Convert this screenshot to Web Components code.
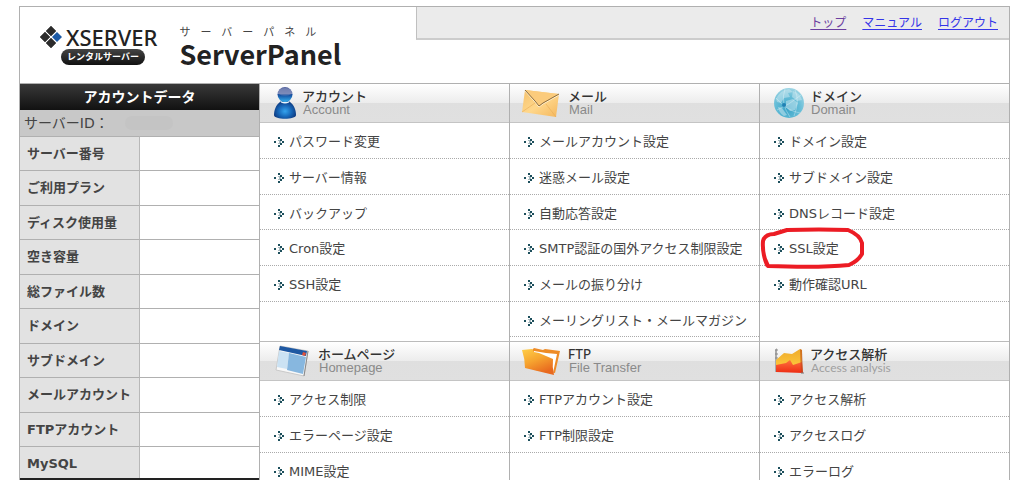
<!DOCTYPE html>
<html lang="ja">
<head>
<meta charset="utf-8">
<title>ServerPanel</title>
<style>
    html {
        overflow-x: hidden;
    }
    body {
        margin: 6px 14px 0 19px;
        background: #fff;
        color: #333;
        font-family: "DejaVu Sans", "Noto Sans CJK JP", sans-serif;
        font-size: 13px;
        line-height: 18px;
    }
</style>
</head>
<body>
<panel-page>
    <panel-header slot="header">
        <panel-link href="#top" visited>トップ</panel-link>
        <panel-link href="#manual">マニュアル</panel-link>
        <panel-link href="#logout">ログアウト</panel-link>
    </panel-header>

    <account-data slot="side" heading="アカウントデータ" serverid="サーバーID："
        rows="サーバー番号,ご利用プラン,ディスク使用量,空き容量,総ファイル数,ドメイン,サブドメイン,メールアカウント,FTPアカウント,MySQL"></account-data>

    <menu-section heading="アカウント" sub="Account" icon="account">
        <menu-item>パスワード変更</menu-item>
        <menu-item>サーバー情報</menu-item>
        <menu-item>バックアップ</menu-item>
        <menu-item>Cron設定</menu-item>
        <menu-item>SSH設定</menu-item>
    </menu-section>
    <menu-section heading="メール" sub="Mail" icon="mail">
        <menu-item>メールアカウント設定</menu-item>
        <menu-item>迷惑メール設定</menu-item>
        <menu-item>自動応答設定</menu-item>
        <menu-item>SMTP認証の国外アクセス制限設定</menu-item>
        <menu-item>メールの振り分け</menu-item>
        <menu-item>メーリングリスト・メールマガジン</menu-item>
    </menu-section>
    <menu-section heading="ドメイン" sub="Domain" icon="domain">
        <menu-item>ドメイン設定</menu-item>
        <menu-item>サブドメイン設定</menu-item>
        <menu-item>DNSレコード設定</menu-item>
        <menu-item marked>SSL設定</menu-item>
        <menu-item>動作確認URL</menu-item>
    </menu-section>
    <menu-section heading="ホームページ" sub="Homepage" icon="homepage">
        <menu-item>アクセス制限</menu-item>
        <menu-item>エラーページ設定</menu-item>
        <menu-item>MIME設定</menu-item>
    </menu-section>
    <menu-section heading="FTP" sub="File Transfer" icon="ftp">
        <menu-item>FTPアカウント設定</menu-item>
        <menu-item>FTP制限設定</menu-item>
    </menu-section>
    <menu-section heading="アクセス解析" sub="Access analysis" icon="analysis">
        <menu-item>アクセス解析</menu-item>
        <menu-item>アクセスログ</menu-item>
        <menu-item>エラーログ</menu-item>
    </menu-section>
</panel-page>

<script>
const icons = {
    account: `<svg width="22" height="32" viewBox="0 0 22 32" aria-hidden="true">
        <defs>
            <radialGradient id="body" cx=".5" cy=".6" r=".6"><stop offset="0" stop-color="#35a4ee"/><stop offset=".5" stop-color="#1767b8"/><stop offset="1" stop-color="#0b2d70"/></radialGradient>
            <linearGradient id="head" x2="0" y2="1"><stop offset="0" stop-color="#50609c"/><stop offset=".45" stop-color="#7482b4"/><stop offset=".5" stop-color="#124a9c"/><stop offset="1" stop-color="#38b2f0"/></linearGradient>
        </defs>
        <path d="M7 13h8l1 2c4 3 6 8 6 13 0 5-22 5-22 0C0 23 2 18 6 15z" fill="url(#body)"/>
        <path d="M6 13.500q5 3 10 0l-1 2q-4 2-8 0z" fill="#e8f5fc"/>
        <circle cx="11" cy="7.500" r="7.500" fill="url(#head)"/>
        <path d="M4 7q0-6 7-6t7 6q-7 3-14 0z" fill="#8793bd" opacity=".55"/>
    </svg>`,
    mail: `<svg width="38" height="32" viewBox="0 0 38 32" aria-hidden="true">
        <defs><linearGradient id="env" x2="1" y2="1"><stop offset="0" stop-color="#f5c16c"/><stop offset=".5" stop-color="#ffd78b"/><stop offset="1" stop-color="#f4b65c"/></linearGradient></defs>
        <path d="M1 3l34 4-3 23-34-5z" fill="url(#env)"/>
        <path d="M1 3l15 17L35 7" fill="#fbcb7c"/>
        <path d="M-2 25l13-9m11 1l10 13" stroke="#e7ac57" fill="none" opacity=".6"/>
        <path d="M1 4l10 11 4 5 4-3 16-9" fill="none" stroke="#fff0cf" stroke-width="1"/>
        <path d="M1 3l10 11 4 5 4-3 16-9" fill="none" stroke="#6e5430" stroke-width="1" opacity=".8"/>
    </svg>`,
    domain: `<svg width="30" height="30" viewBox="0 0 30 30" aria-hidden="true">
        <defs><radialGradient id="globe" cx=".45" cy=".7" r=".7"><stop offset="0" stop-color="#3ba4c8"/><stop offset=".6" stop-color="#66bdd7"/><stop offset="1" stop-color="#9ed5e4"/></radialGradient></defs>
        <circle cx="15" cy="15" r="15" fill="url(#globe)"/>
        <path d="M2 11q4-9 13-10l4 3-5 1 2 4-6 1-3 5-4-1zM19 3q7 2 9 9l-5 1-5-4zM12 13l7-2 5 4-3 7-5 1-4-4zM4 19l4 1 5 7-3 1q-5-3-6-9z" fill="#cfeaf1" opacity=".5"/>
        <path d="M2 10q11 13 24 15M11 1q-5 14 5 28M3 22Q15 17 27 7M21 2q5 11-1 26" fill="none" stroke="#f0fafc" stroke-width="1" opacity=".35"/>
        <circle cx="10" cy="17" r="2" fill="#2181b4"/>
    </svg>`,
    homepage: `<svg width="38" height="32" viewBox="0 0 38 32" aria-hidden="true">
        <path d="M6 1l28 5-4 25-28-6z" fill="#f8f8f8" stroke="#c9c9c9" stroke-width="1"/>
        <path d="M34 6l-4 25" stroke="#8a8a8a" stroke-width="1"/>
        <path d="M6 1l27 5-1 5-27-6z" fill="#1e58a2"/>
        <path d="M29 7l3 1-1 3-3-1z" fill="#e2513a"/>
        <path d="M5 6l10 2-2 16-10-2z" fill="#cbe2f3"/>
        <path d="M15 8l17 4-3 17-16-4z" fill="#87b7df"/>
    </svg>`,
    ftp: `<svg width="38" height="32" viewBox="0 0 38 32" aria-hidden="true">
        <defs><linearGradient id="folder" x2=".5" y2="1"><stop offset="0" stop-color="#ffcf48"/><stop offset=".5" stop-color="#f6a42f"/><stop offset="1" stop-color="#e8691f"/></linearGradient></defs>
        <path d="M8 5l2-2 9 2 2-1 15 2-5 22-20-3z" fill="#ee8b26"/>
        <path d="M10 6l12 2 11 1-4 19-8-14-11-2z" fill="#fff"/>
        <path d="M-2 5l10-1 2 3 5 1 14 6q-1 8 1 16L1 23Q1 14-2 5z" fill="url(#folder)"/>
    </svg>`,
    analysis: `<svg width="30" height="30" viewBox="0 0 30 30" aria-hidden="true">
        <defs>
            <linearGradient id="red" x2="0" y2="1"><stop offset="0" stop-color="#ff703d"/><stop offset="1" stop-color="#ed2c14"/></linearGradient>
            <linearGradient id="yel" x2="0" y2="1"><stop offset="0" stop-color="#efab2c"/><stop offset="1" stop-color="#ffcc3e"/></linearGradient>
        </defs>
        <path d="M3 2L1 4v22h2z" fill="#aaa"/>
        <path d="M1 4h3M1 8h3M1 12h3" stroke="#888"/>
        <path d="M2 14l8-7 8 1 8-5 2 1v20H2z" fill="url(#yel)"/>
        <path d="M2 19l10-2 4-3 3 5 9-3 1 11-27-1z" fill="url(#red)"/>
        <path d="M26 3l2 1 1 22-2 1z" fill="#b94a18" opacity=".6"/>
        <path d="M27 27h3" stroke="#777"/>
    </svg>`
}

class PanelPage extends HTMLElement {
    constructor() {
        super()
        this.attachShadow({ mode: 'open' }).innerHTML = `
            <style>
                :host {
                    display: block;
                    border: 1px solid #b0b0b0;
                    border-bottom: 0;
                }
                .columns {
                    display: grid;
                    grid-template-columns: minmax(0, 29fr) minmax(0, 91fr);
                    align-items: start;
                }
                main {
                    display: grid;
                    grid-template-columns: repeat(3, minmax(0, 1fr));
                }
            </style>
            <slot name="header"></slot>
            <div class="columns">
                <slot name="side"></slot>
                <main><slot></slot></main>
            </div>`
    }
}
customElements.define('panel-page', PanelPage)

class PanelHeader extends HTMLElement {
    constructor() {
        super()
        this.attachShadow({ mode: 'open' }).innerHTML = `
            <style>
                :host {
                    display: grid;
                    grid-template-columns: minmax(0, 40fr) minmax(0, 60fr);
                    align-items: start;
                    min-height: 76px;
                    border-bottom: 1px solid #b0b0b0;
                    color: #222;
                    font-family: "Noto Sans CJK JP", sans-serif;
                }
                .logos {
                    display: flex;
                    align-items: start;
                    gap: 22px;
                    padding: 18px 0 0 20px;
                    white-space: nowrap;
                }
                .brand {
                    display: grid;
                    justify-items: start;
                }
                .name {
                    display: flex;
                    align-items: center;
                    gap: 4px;
                    font: 500 22px/24px "Noto Sans", sans-serif;
                }
                .pill {
                    margin-left: 21px;
                    padding: 0 6px;
                    border-radius: 8px;
                    background: linear-gradient(#444, #111);
                    color: #fff;
                    font-family: Lato, "Noto Sans CJK JP", sans-serif;
                    font-size: 9px;
                    font-weight: 700;
                    line-height: 16px;
                }
                .kana {
                    font-family: Lato, "Noto Sans CJK JP", sans-serif;
                    font-size: 11px;
                    line-height: 14px;
                    letter-spacing: 10px;
                    color: #444;
                }
                h1 {
                    margin: 0;
                    font-size: 27px;
                    font-weight: 700;
                    line-height: 30px;
                }
                nav {
                    display: flex;
                    justify-content: flex-end;
                    gap: 16px;
                    padding: 6px 11px 7px;
                    border-left: 1px solid #c0c0c0;
                    border-bottom: 2px solid #ccc;
                    background: #ebebeb;
                }
            </style>
            <div class="logos">
                <div class="brand">
                    <div class="name">
                        <svg width="22" height="22" viewBox="0 0 22 22" aria-hidden="true">
                            <path d="M11 0l5 5-5 5-5-5zM5 6l5 5-5 5-5-5zM11 12l5 5-5 5-5-5z" fill="#2b2b2b" stroke="#2b2b2b" stroke-width=".5" stroke-linejoin="round"/>
                            <path d="M17 6l5 5-5 5-5-5z" fill="#1c5aa6"/>
                        </svg>
                        <span>XSERVER</span>
                    </div>
                    <div class="pill">レンタルサーバー</div>
                </div>
                <div>
                    <div class="kana">サーバーパネル</div>
                    <h1>ServerPanel</h1>
                </div>
            </div>
            <nav><slot></slot></nav>`
    }
}
customElements.define('panel-header', PanelHeader)

class PanelLink extends HTMLElement {
    connectedCallback() {
        const color = this.hasAttribute('visited') ? '#6b3fa0' : '#3535e8'
        this.attachShadow({ mode: 'open' }).innerHTML = `
            <style>
                :host { display: block; }
                a {
                    color: ${color};
                    font-size: 12px;
                    text-underline-offset: 2px;
                }
            </style>
            <a href="${this.getAttribute('href')}"><slot></slot></a>`
    }
}
customElements.define('panel-link', PanelLink)

class AccountData extends HTMLElement {
    connectedCallback() {
        const rows = this.getAttribute('rows').split(',')
            .map(label => `<tr><th scope="row">${label}</th><td></td></tr>`)
            .join('')
        this.attachShadow({ mode: 'open' }).innerHTML = `
            <style>
                :host {
                    display: block;
                    border-bottom: 3px solid #222;
                    color: #444;
                }
                h2 {
                    margin: 0;
                    background: linear-gradient(#383838, #111);
                    color: #fff;
                    font-size: 14px;
                    font-weight: 700;
                    line-height: 26px;
                    text-align: center;
                }
                .server {
                    display: flex;
                    align-items: center;
                    gap: 16px;
                    padding: 0 4px;
                    background: #c8c8c8;
                    font-size: 14px;
                    line-height: 26px;
                }
                .value {
                    width: 48px;
                    height: 14px;
                    border-radius: 7px;
                    background: #c4c4c4;
                }
                table {
                    width: 100%;
                    border-collapse: separate;
                    border-spacing: 0;
                    table-layout: fixed;
                }
                th, td {
                    box-sizing: border-box;
                    height: 35px;
                    padding: 0 7px;
                    border-top: 1px solid #b0b0b0;
                }
                tr:nth-child(odd) > * { height: 34px; }
                tr:last-child > * {
                    height: 32px;
                    padding-top: 2px;
                }
                th {
                    width: 50%;
                    border-right: 1px solid #b8b8b8;
                    background: #e2e2e2;
                    text-align: left;
                    white-space: nowrap;
                    font-weight: 700;
                }
            </style>
            <h2>${this.getAttribute('heading')}</h2>
            <div class="server">${this.getAttribute('serverid')}<span class="value"></span></div>
            <table>${rows}</table>`
    }
}
customElements.define('account-data', AccountData)

class MenuSection extends HTMLElement {
    connectedCallback() {
        const icon = this.getAttribute('icon')
        this.attachShadow({ mode: 'open' }).innerHTML = `
            <style>
                :host {
                    display: block;
                    padding-bottom: 4px;
                    border-left: 1px solid #b0b0b0;
                }
                :host(:nth-of-type(n+4)) { border-top: 1px solid #bbb; }
                header {
                    display: flex;
                    align-items: center;
                    gap: 6px;
                    box-sizing: border-box;
                    height: 39px;
                    padding-left: 14px;
                    border-bottom: 1px solid #c4c4c4;
                    background: linear-gradient(#fff, #ececec 50%, #dfdfdf 50%, #e0e0e0);
                }
                svg { overflow: visible; }
                h2 {
                    margin: 0;
                    font: 500 13px/14px Lato, "Noto Sans CJK JP", sans-serif;
                }
                p {
                    margin: 0;
                    padding-left: 1px;
                    color: #8a8a8a;
                    font: 13px/14px "Liberation Sans", sans-serif;
                }
                :host([icon="analysis"]) p {
                    color: #a0a0a0;
                    font: 12px/14px Lato, sans-serif;
                }
            </style>
            <header>
                ${icons[icon]}
                <div>
                    <h2>${this.getAttribute('heading')}</h2>
                    <p>${this.getAttribute('sub')}</p>
                </div>
            </header>
            <slot></slot>`
    }
}
customElements.define('menu-section', MenuSection)

class MenuItem extends HTMLElement {
    connectedCallback() {
        const mark = this.hasAttribute('marked')
            ? `<svg class="mark" width="106" height="44" viewBox="0 0 106 44" aria-hidden="true">
                <path d="M7 40Q2 28 3 16Q5 9 14 9L27 5Q60 4 88 5Q100 10 102 18V29Q98 36 89 40Q60 43 8 41L5 34" fill="none" stroke="#ec1c24" stroke-width="4" stroke-linecap="round" stroke-linejoin="round"/>
            </svg>`
            : ''
        this.attachShadow({ mode: 'open' }).innerHTML = `
            <style>
                :host {
                    display: flex;
                    align-items: center;
                    position: relative;
                    box-sizing: border-box;
                    height: 36px;
                    padding: 3px 0 0 14px;
                    border-bottom: 1px dotted #aaa;
                }
                :host(:nth-of-type(3n)) { height: 35px; }
                a {
                    display: flex;
                    align-items: center;
                    gap: 5px;
                    color: #444;
                    text-decoration: none;
                    white-space: nowrap;
                }
                .mark {
                    position: absolute;
                    left: 0;
                    top: -5px;
                    z-index: 1;
                    pointer-events: none;
                }
            </style>
            <a href="#">
                <svg width="10" height="10" viewBox="0 0 10 10" fill="#1d4f5c" aria-hidden="true">
                    <path d="M0 4h2v2H0zM4 0h2v2H4zM6 2h2v2H6zM8 4h2v2H8zM6 6h2v2H6zM4 8h2v2H4z"/>
                    <path d="M4 3h2v1H4zM5 4h2v2H5zM4 6h2v1H4z" opacity=".4"/>
                </svg>
                <span><slot></slot></span>
            </a>${mark}`
    }
}
customElements.define('menu-item', MenuItem)
</script>
</body>
</html>
